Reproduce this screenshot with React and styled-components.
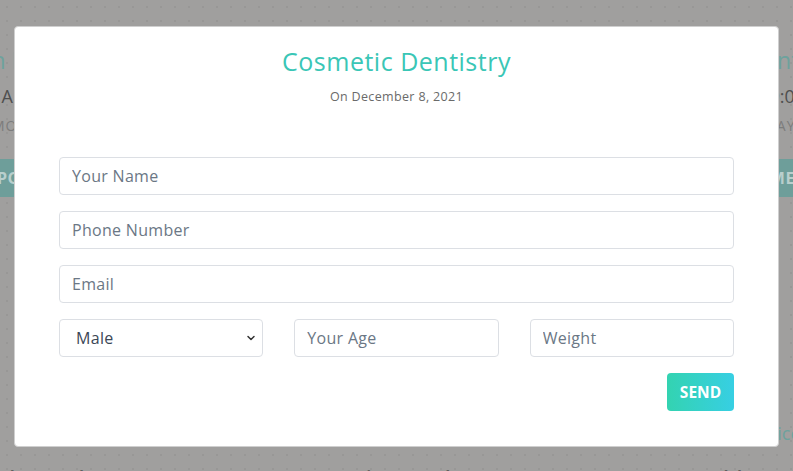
import React from 'react';
import styled, { createGlobalStyle } from 'styled-components';
import { ChevronDown } from 'lucide-react';

const GlobalStyle = createGlobalStyle`
  html, body {
    margin: 0;
    padding: 0;
    background: #a09f9e;
    font-family: 'Open Sans', 'Noto Sans', sans-serif;
  }
  * { box-sizing: border-box; }
`;

// dimmed page that sits behind the modal
const Page = styled.div`
  height: 471px;
  overflow: hidden;
  background-color: #a09f9e;
  background-image: radial-gradient(#989796 1.2px, transparent 1.4px);
  background-size: 14px 14px;
`;

const CardRow = styled.div`
  display: flex;
  justify-content: center;
  gap: 60px;
  padding-top: 44px;
`;

const Card = styled.div`
  flex: 0 0 300px;
  display: flex;
  flex-direction: column;
  align-items: center;
`;

const CardTitle = styled.div`
  font-size: 23px;
  line-height: 32px;
  font-weight: 500;
  color: #6da29d;
  white-space: nowrap;
`;

const CardTime = styled.div`
  margin-top: 8px;
  font-size: 18px;
  line-height: 24px;
  color: #4f4f4f;
  white-space: nowrap;
`;

const CardDay = styled.div`
  margin-top: 8px;
  font-size: 14px;
  line-height: 20px;
  letter-spacing: 1px;
  text-transform: uppercase;
  color: #7c7c7c;
  white-space: nowrap;
`;

const CardButton = styled.div`
  margin-top: 23px;
  width: 220px;
  height: 38px;
  display: flex;
  align-items: center;
  justify-content: center;
  background: #6e9e9a;
  color: #b9cfcd;
  font-weight: 700;
  font-size: 16px;
  letter-spacing: 0.5px;
  border-radius: 3px;
`;

const LowerRow = styled.div`
  display: flex;
  justify-content: center;
  gap: 60px;
  margin-top: 224px;
`;

const LowerCard = styled.div`
  flex: 0 0 300px;
  display: flex;
  flex-direction: column;
  align-items: center;
`;

const LowerTitle = styled.div`
  font-size: 18px;
  line-height: 24px;
  color: #6da29d;
  white-space: nowrap;
  visibility: ${p => (p.$hidden ? 'hidden' : 'visible')};
`;

const LowerHeading = styled.div`
  margin-top: 19px;
  font-size: 20px;
  line-height: 28px;
  font-weight: 600;
  color: #5f5f5f;
  white-space: nowrap;
`;

const Overlay = styled.div`
  position: fixed;
  inset: 0;
  display: flex;
  justify-content: center;
  align-items: flex-start;
  padding-top: 26px;
`;

const Modal = styled.div`
  width: 765px;
  background: #fff;
  border: 1px solid #cfcfcf;
  border-radius: 4px;
  padding: 17px 44px 35px;
`;

const Title = styled.h2`
  margin: 0;
  text-align: center;
  font-size: 25px;
  line-height: 34px;
  font-weight: 500;
  letter-spacing: 0.5px;
  color: #3ac6b6;
`;

const DateLine = styled.p`
  margin: 10px 0 0;
  text-align: center;
  font-size: 12.5px;
  line-height: 18px;
  letter-spacing: 0.35px;
  color: #6a6a6a;
`;

const Form = styled.form`
  margin-top: 51px;
  display: flex;
  flex-direction: column;
  gap: 16px;
`;

const Input = styled.input`
  display: block;
  width: 100%;
  height: 38px;
  padding: 0 12px;
  border: 1px solid #dcdfe4;
  border-radius: 4px;
  font-family: inherit;
  font-size: 16px;
  letter-spacing: 0.3px;
  color: #3f4b59;
  background: #fff;
  outline: none;
  &::placeholder {
    color: #6b7785;
  }
`;

const Row = styled.div`
  display: grid;
  grid-template-columns: repeat(3, 1fr);
  gap: 31px;
`;

const SelectWrap = styled.div`
  position: relative;
`;

const Select = styled.select`
  display: block;
  width: 100%;
  height: 38px;
  padding: 0 16px;
  border: 1px solid #dcdfe4;
  border-radius: 4px;
  font-family: inherit;
  font-size: 16px;
  letter-spacing: 0.3px;
  color: #3b4756;
  background: #fff;
  appearance: none;
  -webkit-appearance: none;
  outline: none;
`;

const Caret = styled(ChevronDown)`
  position: absolute;
  right: 6px;
  top: 13px;
  pointer-events: none;
  color: #333;
`;

const Actions = styled.div`
  display: flex;
  justify-content: flex-end;
`;

const SendButton = styled.button`
  width: 67px;
  height: 38px;
  border: none;
  border-radius: 4px;
  background: linear-gradient(to right, #33d3b1, #37cfe3);
  color: #fff;
  font-family: inherit;
  font-size: 15.5px;
  font-weight: 700;
  cursor: pointer;
`;

const cards = [
  { title: 'Teeth Prevention', time: '8:00 AM - 5:00 PM', day: 'Mon - Tues', btn: 'APPOINTMENT' },
  { title: 'Dental Implants', time: '9:00 AM - 6:00 PM', day: 'Wednesday', btn: 'APPOINTMENT' },
  { title: 'Orthodontics', time: '10:00 AM - 9:00 PM', day: 'Saturday', btn: 'APPOINTMENT' },
];

export default function App() {
  return (
    <>
      <GlobalStyle />
      <Page>
        <CardRow>
          {cards.map(c => (
            <Card key={c.title}>
              <CardTitle>{c.title}</CardTitle>
              <CardTime>{c.time}</CardTime>
              <CardDay>{c.day}</CardDay>
              <CardButton>{c.btn}</CardButton>
            </Card>
          ))}
        </CardRow>
        <LowerRow>
          <LowerCard>
            <LowerTitle $hidden>Services</LowerTitle>
            <LowerHeading>General Dental Care</LowerHeading>
          </LowerCard>
          <LowerCard>
            <LowerTitle $hidden>Services</LowerTitle>
            <LowerHeading>Cosmetic Dental Care</LowerHeading>
          </LowerCard>
          <LowerCard>
            <LowerTitle>Our Services</LowerTitle>
            <LowerHeading>Healthy Smiles</LowerHeading>
          </LowerCard>
        </LowerRow>
      </Page>

      <Overlay>
        <Modal>
          <Title>Cosmetic Dentistry</Title>
          <DateLine>On December 8, 2021</DateLine>
          <Form onSubmit={e => e.preventDefault()}>
            <Input type="text" placeholder="Your Name" />
            <Input type="tel" placeholder="Phone Number" />
            <Input type="email" placeholder="Email" />
            <Row>
              <SelectWrap>
                <Select defaultValue="male">
                  <option value="male">Male</option>
                  <option value="female">Female</option>
                </Select>
                <Caret size={12} strokeWidth={3} />
              </SelectWrap>
              <Input type="number" placeholder="Your Age" />
              <Input type="number" placeholder="Weight" />
            </Row>
            <Actions>
              <SendButton type="submit">SEND</SendButton>
            </Actions>
          </Form>
        </Modal>
      </Overlay>
    </>
  );
}
